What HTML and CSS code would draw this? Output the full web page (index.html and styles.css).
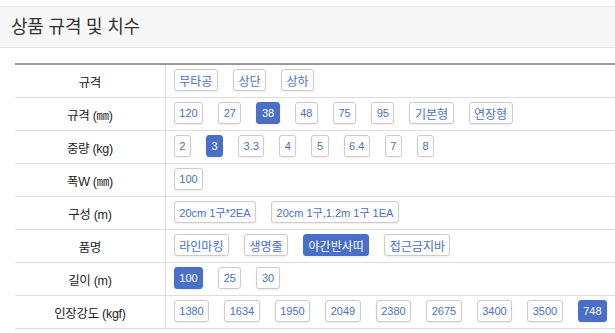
FILE: index.html
```html
<!DOCTYPE html>
<html lang="ko">
<head>
    <meta charset="UTF-8">
    <meta name="viewport" content="width=device-width, initial-scale=1.0">
    <title>상품 규격 및 치수</title>
    <link rel="stylesheet" href="styles.css">
</head>
<body>
    <div class="spec-panel">
        <h3 class="spec-title">상품 규격 및 치수</h3>
    </div>

    <table class="spec-table">
        <tr>
            <th>규격</th>
            <td><div class="opts">
                <button class="opt ko">무타공</button>
                <button class="opt ko">상단</button>
                <button class="opt ko">상하</button>
            </div></td>
        </tr>
        <tr>
            <th>규격 (㎜)</th>
            <td><div class="opts">
                <button class="opt">120</button>
                <button class="opt">27</button>
                <button class="opt active">38</button>
                <button class="opt">48</button>
                <button class="opt">75</button>
                <button class="opt">95</button>
                <button class="opt ko">기본형</button>
                <button class="opt ko">연장형</button>
            </div></td>
        </tr>
        <tr>
            <th>중량 (kg)</th>
            <td><div class="opts">
                <button class="opt">2</button>
                <button class="opt active">3</button>
                <button class="opt">3.3</button>
                <button class="opt">4</button>
                <button class="opt">5</button>
                <button class="opt">6.4</button>
                <button class="opt">7</button>
                <button class="opt">8</button>
            </div></td>
        </tr>
        <tr>
            <th>폭W (㎜)</th>
            <td><div class="opts">
                <button class="opt">100</button>
            </div></td>
        </tr>
        <tr>
            <th>구성 (m)</th>
            <td><div class="opts">
                <button class="opt">20cm 1구*2EA</button>
                <button class="opt">20cm 1구,1.2m 1구 1EA</button>
            </div></td>
        </tr>
        <tr>
            <th>품명</th>
            <td><div class="opts">
                <button class="opt ko">라인마킹</button>
                <button class="opt ko">생명줄</button>
                <button class="opt ko active">야간반사띠</button>
                <button class="opt ko">접근금지바</button>
            </div></td>
        </tr>
        <tr>
            <th>길이 (m)</th>
            <td><div class="opts">
                <button class="opt active">100</button>
                <button class="opt">25</button>
                <button class="opt">30</button>
            </div></td>
        </tr>
        <tr>
            <th>인장강도 (kgf)</th>
            <td><div class="opts">
                <button class="opt">1380</button>
                <button class="opt">1634</button>
                <button class="opt">1950</button>
                <button class="opt">2049</button>
                <button class="opt">2380</button>
                <button class="opt">2675</button>
                <button class="opt">3400</button>
                <button class="opt">3500</button>
                <button class="opt active">748</button>
            </div></td>
        </tr>
    </table>
</body>
</html>
```

FILE: styles.css
```css
:root {
    --accent: #4a6fc6;
    --line: #dddddd;
}

body {
    margin: 0;
    background-color: #fff;
    font-family: "Liberation Sans", "Noto Sans CJK KR", sans-serif;
    color: #333;
    overflow: hidden;
}

.spec-panel {
    margin-top: 6px;
    height: 40px;
    background-color: #f7f7f7;
    border-top: 1px solid #e6e6e6;
    border-bottom: 1px solid #e6e6e6;
}
.spec-title {
    margin: 0;
    padding-left: 11px;
    font-size: 18px;
    font-weight: normal;
    letter-spacing: -0.2px;
    line-height: 40px;
    color: #333;
}

.spec-table {
    margin: 15px 0 0 15px;
    width: calc(100% - 15px);
    border-collapse: collapse;
    border-top: 2px solid #999;
}
.spec-table th {
    width: 150px;
    padding: 0;
    font-size: 12.5px;
    font-weight: normal;
    letter-spacing: -0.3px;
    color: #222;
    text-align: center;
    border-right: 1px solid var(--line);
    border-bottom: 1px solid var(--line);
}
.spec-table td {
    padding: 4px 8px 6px;
    border-bottom: 1px solid var(--line);
}

.opts {
    display: flex;
    gap: 15px;
    white-space: nowrap;
}
.opt {
    height: 22px;
    padding: 0 4.5px;
    font-family: inherit;
    font-size: 11px;
    color: var(--accent);
    background-color: #fff;
    border: 1px solid #ccc;
    border-radius: 3px;
    box-shadow: 0 1px 2px rgba(0, 0, 0, 0.08);
    cursor: pointer;
}
/* hangul-only labels read small at 11px */
.opt.ko {
    font-size: 12px;
}
.opt.active {
    color: #fff;
    background-color: var(--accent);
    border-color: var(--accent);
}
```
